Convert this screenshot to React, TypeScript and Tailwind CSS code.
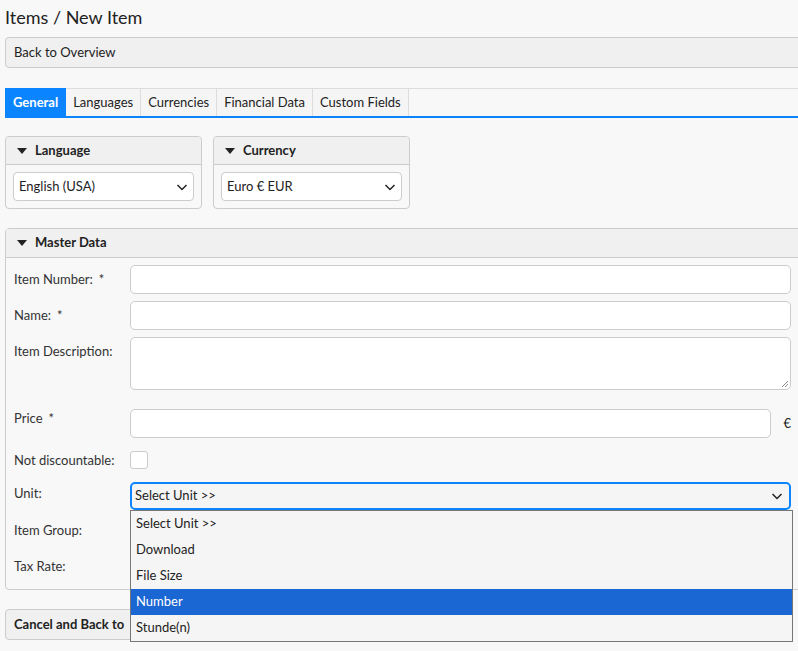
import React from "react";

const Chev = () => (
  <svg width="12" height="12" viewBox="0 0 12 12" fill="none" stroke="#222" strokeWidth="1.5"><path d="M1.5 4l4.5 4.5L10.5 4" /></svg>
);
const Tri = () => (
  <svg width="10" height="8" viewBox="0 0 10 8"><path d="M0 1h10L5 7z" fill="#222" /></svg>
);

function Row({ label, req, h = "h-[29px]", children, mt, pt = "pt-[5px]" }: { label: string; req?: boolean; h?: string; children?: React.ReactNode; mt: string; pt?: string }) {
  return (
    <div className={`flex ${mt}`}>
      <div className={`w-[116px] shrink-0 ${pt} text-[#333] leading-[18px]`}>{label}{req && <span className="ml-[6px]">*</span>}</div>
      <div className={`flex-1 ${h} flex items-center`}>{children}</div>
    </div>
  );
}

export default function App() {
  const inp = "w-full h-full bg-white border border-[#ccc] rounded-[5px]";
  return (
    <div className="w-[798px] h-[651px] overflow-hidden bg-[#f8f8f8] text-[13px] text-[#222]" style={{ fontFamily: 'Lato, sans-serif' }}>
      <div className="w-[810px] pl-[5px]">
        <div className="text-[18px] pt-[5px] leading-[24px] text-[#222]">Items / New Item</div>
        <div className="mt-[8px] h-[31px] border border-[#ccc] rounded-[4px] bg-[#f0f0f0] flex items-center px-[8px]">Back to Overview</div>
        <div className="mt-[20px] flex border-b-2 border-[#0a84ff] h-[30px]">
          <div className="bg-[#0a84ff] text-white font-bold px-[8px] flex items-center border-t border-[#0a84ff]">General</div>
          {["Languages", "Currencies", "Financial Data", "Custom Fields"].map(t => (
            <div key={t} className="px-[7px] flex items-center border-t border-r border-[#ddd] bg-[#f5f5f5]">{t}</div>
          ))}
          <div className="flex-1 border-t border-[#ddd]" />
        </div>
        <div className="mt-[18px] flex gap-[11px]">
          {[["Language", "English (USA)"], ["Currency", "Euro € EUR"]].map(([t, v]) => (
            <div key={t} className="w-[197px] border border-[#ccc] rounded-[4px] bg-[#f8f8f8]">
              <div className="h-[28px] flex items-center gap-[8px] px-[11px] font-bold bg-[#f0f0f0] border-b border-[#ccc] rounded-t-[4px]"><Tri />{t}</div>
              <div className="p-[7px]">
                <div className="h-[29px] bg-white border border-[#ccc] rounded-[4px] flex items-center justify-between px-[5px]">{v}<Chev /></div>
              </div>
            </div>
          ))}
        </div>
        <div className="mt-[19px] border border-[#ccc] rounded-[4px] h-[362px] pb-[10px]">
          <div className="h-[29px] flex items-center gap-[8px] px-[11px] font-bold bg-[#f0f0f0] border-b border-[#ccc]"><Tri />Master Data</div>
          <div className="pl-[8px] pr-[18px] relative">
            <Row label="Item Number:" req mt="mt-[7px]"><div className={inp} /></Row>
            <Row label="Name:" req mt="mt-[7px]"><div className={inp} /></Row>
            <Row label="Item Description:" h="h-[53px]" mt="mt-[7px]"><div className={`${inp} relative`}>
              <svg className="absolute right-[1px] bottom-[1px]" width="8" height="8" viewBox="0 0 8 8" stroke="#888"><path d="M1 7L7 1M4 7L7 4" /></svg>
            </div></Row>
            <Row label="Price" req mt="mt-[19px]" pt="pt-0"><div className={`${inp} w-[641px]`} /><span className="ml-[12px]">€</span></Row>
            <Row label="Not discountable:" h="h-[18px]" mt="mt-[13px]" pt="pt-0"><div className="w-[18px] h-[18px] bg-white border border-[#ccc] rounded-[3px]" /></Row>
            <Row label="Unit:" h="h-[28px]" mt="mt-[13px]" pt="pt-[2px]"><div className="w-full h-full bg-[#f5f5f5] border-2 border-[#0a84ff] rounded-[5px] flex items-center justify-between px-[3px] pr-[6px]">Select Unit &gt;&gt;<Chev /></div></Row>
            <Row label="Item Group:" mt="mt-[7px]" pt="pt-[4px]" />
            <Row label="Tax Rate:" mt="mt-[7px]" pt="pt-[4px]" />
            <div className="absolute left-[124px] top-[245px] w-[663px] bg-[#f5f5f5] border border-[#777]">
              {["Select Unit >>", "Download", "File Size", "Number", "Stunde(n)"].map(o => (
                <div key={o} className={`h-[26px] flex items-center px-[5px] ${o === "Number" ? "bg-[#1a66d2] text-white" : ""}`}>{o}</div>
              ))}
            </div>
          </div>
        </div>
        <div className="mt-[19px] h-[31px] w-[200px] border border-[#ccc] rounded-[4px] bg-[#f0f0f0] flex items-center px-[8px] font-bold">Cancel and Back to</div>
      </div>
    </div>
  );
}
